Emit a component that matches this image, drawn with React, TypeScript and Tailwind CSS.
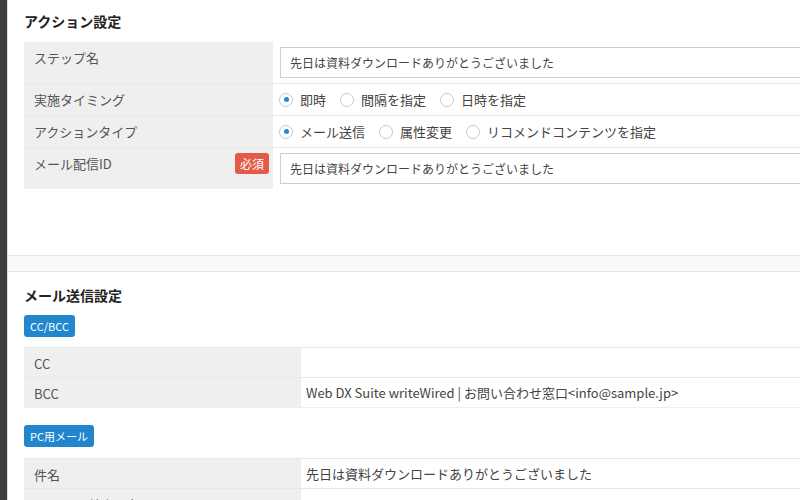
import type { ReactNode } from 'react';

const font = { fontFamily: '"Noto Sans CJK JP", "Noto Sans", sans-serif' };

function Radio({ label, checked }: { label: string; checked?: boolean }) {
  return (
    <label className="flex items-center gap-[7px] mr-[14px]">
      <span className="flex h-[14px] w-[14px] items-center justify-center rounded-full border border-[#c8c8c8] bg-white">
        {checked && <span className="h-[5px] w-[5px] rounded-full bg-[#2a87d2]" />}
      </span>
      <span className="text-[13px] text-[#444]">{label}</span>
    </label>
  );
}

function Row({ label, badge, children, labelWidth, labelPad = 'pl-[10px]' }: { label: string; badge?: string; children: ReactNode; labelWidth: string; labelPad?: string }) {
  return (
    <div className="flex border-t border-[#e8e8e8]">
      <div className={`${labelWidth} ${labelPad} flex shrink-0 items-start justify-between bg-[#efefef] pr-[4px]`}>
        <span className="mt-[6px] text-[13px] leading-[20px] text-[#555]">{label}</span>
        {badge && (
          <span className="mt-[5px] rounded-[3px] bg-[#e35b48] px-[5px] text-[12px] leading-[21px] text-white">{badge}</span>
        )}
      </div>
      <div className="flex-1">{children}</div>
    </div>
  );
}

function Input({ value }: { value: string }) {
  return (
    <div className="py-[5px] pl-[7px]">
      <div className="h-[31px] border border-[#cfcfcf] bg-white pl-[9px] text-[12px] leading-[29px] text-[#444]">{value}</div>
    </div>
  );
}

function Badge({ children }: { children: ReactNode }) {
  return (
    <div className="w-fit rounded-[3px] bg-[#2286cf] px-[6px] text-[11px] leading-[22px] text-white">{children}</div>
  );
}

const subject = '先日は資料ダウンロードありがとうございました';

export default function App() {
  return (
    <div className="flex h-[500px] w-[800px] overflow-hidden bg-white" style={font}>
      <div className="w-[7px] shrink-0 bg-[#3d3d3d]" />
      <div className="w-[1100px] shrink-0 border-l border-[#dcdcdc]">
        <section className="h-[256px] border-b border-[#e6e6e6] bg-white pl-[16px] pt-[11px]">
          <h2 className="mb-[11px] text-[14px] font-bold leading-[20px] text-[#222]">アクション設定</h2>
          <div className="[&>div:first-child]:border-t-0">
            <Row label="ステップ名" labelWidth="w-[249px]">
              <Input value={subject} />
            </Row>
            <Row label="実施タイミング" labelWidth="w-[249px]">
              <div className="flex h-[31px] items-center pl-[6px]">
                <Radio label="即時" checked />
                <Radio label="間隔を指定" />
                <Radio label="日時を指定" />
              </div>
            </Row>
            <Row label="アクションタイプ" labelWidth="w-[249px]">
              <div className="flex h-[31px] items-center pl-[6px]">
                <Radio label="メール送信" checked />
                <Radio label="属性変更" />
                <Radio label="リコメンドコンテンツを指定" />
              </div>
            </Row>
            <Row label="メール配信ID" badge="必須" labelWidth="w-[249px]">
              <Input value={subject} />
            </Row>
          </div>
        </section>
        <div className="h-[15px] bg-[#fafafa]" />
        <section className="border-t border-[#e6e6e6] bg-white pl-[16px] pt-[12px]">
          <h2 className="mb-[9px] text-[14px] font-bold leading-[22px] text-[#222]">メール送信設定</h2>
          <Badge>CC/BCC</Badge>
          <div className="mt-[10px] mb-[17px] border-b border-[#eeeeee]">
            <Row label="CC" labelWidth="w-[277px]">
              <div className="h-[29px]" />
            </Row>
            <Row label="BCC" labelWidth="w-[277px]">
              <div className="h-[29px] pl-[5px] text-[13px] leading-[29px] text-[#444]">
                Web DX Suite writeWired | お問い合わせ窓口&lt;info@sample.jp&gt;
              </div>
            </Row>
          </div>
          <Badge>PC用メール</Badge>
          <div className="mt-[11px]">
            <Row label="件名" labelWidth="w-[277px]">
              <div className="h-[29px] pl-[5px] text-[13px] leading-[29px] text-[#444]">{subject}</div>
            </Row>
            <Row label="差出人名" labelWidth="w-[277px]" labelPad="pl-[64px]">
              <div className="h-[29px]" />
            </Row>
          </div>
        </section>
      </div>
    </div>
  );
}
